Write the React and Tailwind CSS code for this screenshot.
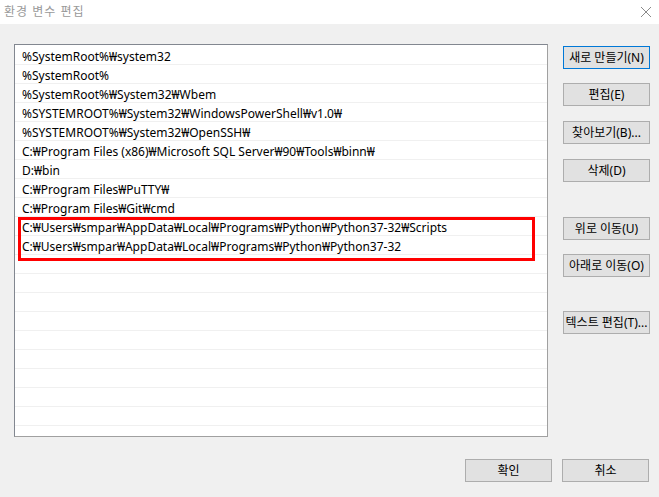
import React from "react";

const paths = [
  "%SystemRoot%₩system32",
  "%SystemRoot%",
  "%SystemRoot%₩System32₩Wbem",
  "%SYSTEMROOT%₩System32₩WindowsPowerShell₩v1.0₩",
  "%SYSTEMROOT%₩System32₩OpenSSH₩",
  "C:₩Program Files (x86)₩Microsoft SQL Server₩90₩Tools₩binn₩",
  "D:₩bin",
  "C:₩Program Files₩PuTTY₩",
  "C:₩Program Files₩Git₩cmd",
  "C:₩Users₩smpar₩AppData₩Local₩Programs₩Python₩Python37-32₩Scripts",
  "C:₩Users₩smpar₩AppData₩Local₩Programs₩Python₩Python37-32",
];

const rows = [...paths, ...Array(10).fill("")];

const Btn = ({ children, className = "", primary = false }) => (
  <button
    className={`h-[23px] w-[87px] text-[12px] text-black bg-[#e1e1e1] border ${
      primary ? "border-[#0078d7]" : "border-[#adadad]"
    } flex items-center justify-center ${className}`}
  >
    {children}
  </button>
);

const App = () => {
  return (
    <div
      className="w-[659px] h-[497px] flex flex-col bg-[#f0f0f0] overflow-hidden"
      style={{ fontFamily: '"Noto Sans", "Noto Sans CJK KR", sans-serif' }}
    >
      <div className="h-[24px] bg-white flex items-center justify-between pl-[4px] pr-[6px]">
        <span className="text-[12px] text-[#999999] tracking-[1px]">환경 변수 편집</span>
        <svg width="12" height="12" viewBox="0 0 12 12" className="mr-[1px]">
          <path d="M1 1L11 11M11 1L1 11" stroke="#8a8a8a" strokeWidth="1" />
        </svg>
      </div>

      <div className="flex flex-1 pt-[20px] pl-[14px]">
        <div className="relative w-[534px] h-[393px] bg-white border border-[#828790] border-r-[#a0a0a0] border-b-[#a0a0a0] overflow-hidden">
          <div className="pt-[1px]">
            {rows.map((r, i) => (
              <div
                key={i}
                className="h-[19px] border-b border-[#f0f0f0] pl-[7px] text-[12px] leading-[21px] text-black whitespace-nowrap"
              >
                {r}
              </div>
            ))}
          </div>
          <div className="absolute left-[3px] top-[172px] w-[517px] h-[44px] border-[3px] border-[#ff0000]" />
        </div>

        <div className="ml-[15px] pt-[2px] flex flex-col">
          <Btn primary>새로 만들기(N)</Btn>
          <Btn className="mt-[14px]">편집(E)</Btn>
          <Btn className="mt-[15px]">찾아보기(B)...</Btn>
          <Btn className="mt-[15px]">삭제(D)</Btn>
          <Btn className="mt-[35px]">위로 이동(U)</Btn>
          <Btn className="mt-[14px]">아래로 이동(O)</Btn>
          <Btn className="mt-[34px]">텍스트 편집(T)...</Btn>
        </div>
      </div>

      <div className="h-[38px] flex justify-end gap-[10px] pr-[10px] pb-[15px]">
        <Btn>확인</Btn>
        <Btn>취소</Btn>
      </div>
    </div>
  );
};

export default App;
